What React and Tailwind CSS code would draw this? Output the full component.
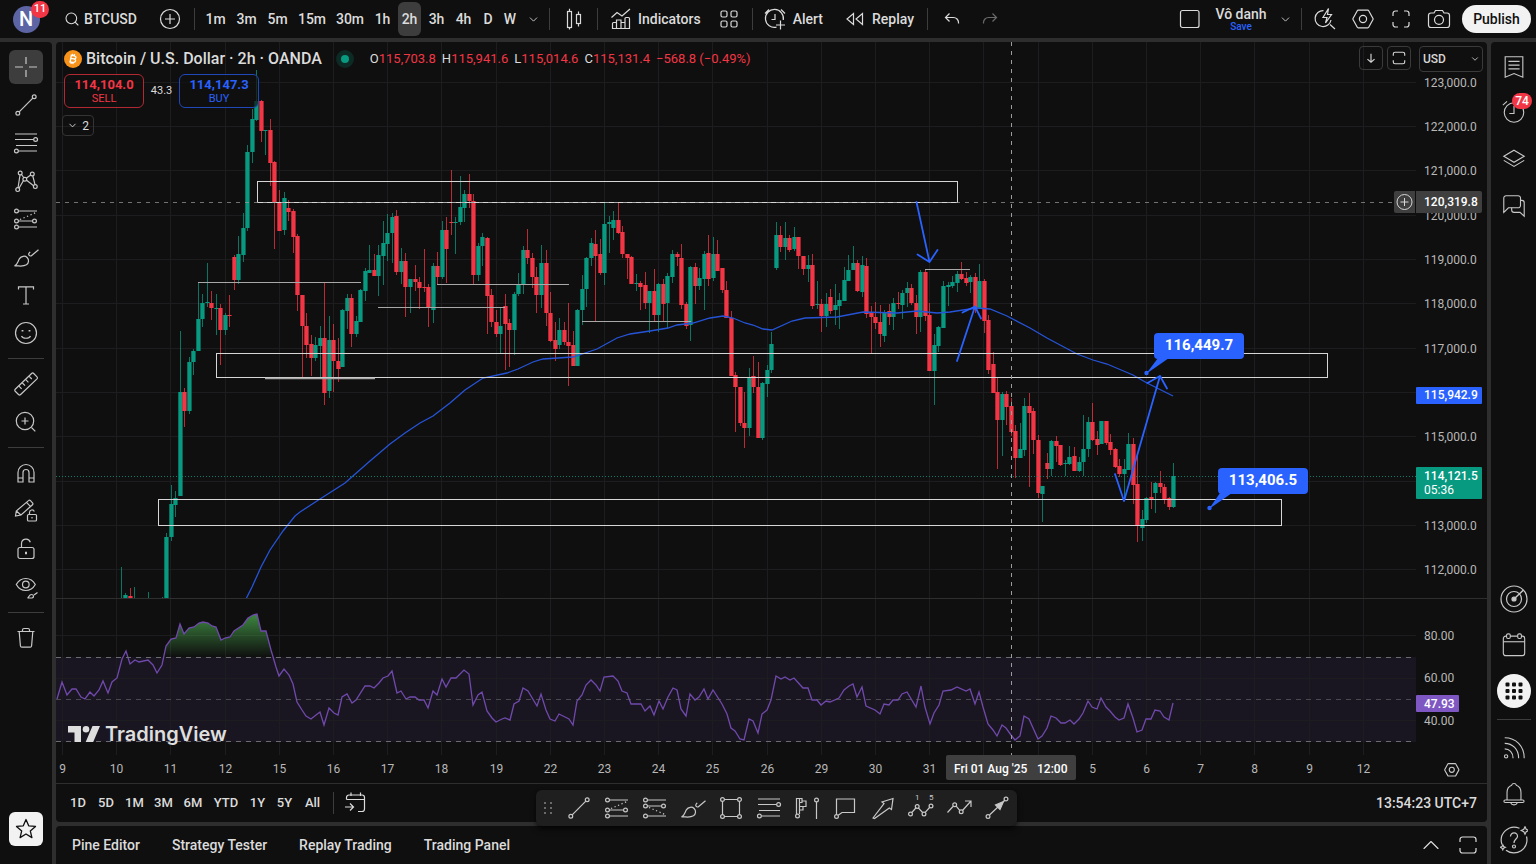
import { ChevronDown, ChevronUp, Search } from 'lucide-react';

// candles are [up, high, top, bottom, low] in chart space, one per two hours
const FIRST_BAR = 13;
const BAR_STEP = 4.517;
const CANDLES = [
  [1, 567, 598, 599, 599], [1, 593, 595, 599, 599], [0, 588, 596, 599, 599], [1, 587, 598, 599, 599], null, null, [1, 592, 598, 599, 599], null, null, [1, 597, 598, 599, 599],
  [1, 533, 537, 599, 599], [1, 485, 504, 537, 541], [1, 491, 498, 505, 517], [1, 331, 392, 496, 496], [0, 388, 392, 411, 427], [1, 357, 362, 411, 414], [1, 349, 351, 362, 375],
  [1, 282, 319, 351, 351], [1, 294, 303, 319, 327], [1, 263, 302, 303, 307], [0, 291, 303, 308, 320], [1, 294, 308, 309, 335], [0, 304, 308, 330, 365], [1, 313, 315, 330, 335],
  [0, 295, 315, 316, 327], [0, 255, 257, 280, 290], [1, 236, 254, 280, 284], [1, 213, 228, 255, 262], [1, 145, 152, 228, 231], [1, 109, 119, 152, 163], [1, 70, 101, 120, 121],
  [0, 100, 101, 131, 142], [1, 130, 130, 131, 155], [0, 119, 130, 163, 186], [0, 161, 162, 202, 249], [0, 190, 202, 231, 231], [1, 192, 198, 230, 235], [0, 200, 208, 212, 221],
  [0, 209, 211, 237, 253], [0, 234, 236, 295, 311], [0, 295, 295, 326, 379], [0, 313, 326, 345, 358], [0, 335, 344, 358, 376], [1, 337, 345, 358, 361], [1, 326, 338, 346, 378],
  [0, 282, 338, 393, 405], [1, 316, 340, 391, 398], [0, 324, 340, 361, 392], [0, 338, 361, 369, 382], [1, 309, 310, 367, 367], [1, 294, 298, 311, 329], [0, 294, 298, 334, 347],
  [1, 316, 321, 334, 337], [1, 289, 290, 322, 322], [1, 268, 271, 291, 301], [1, 245, 270, 273, 273], [0, 254, 270, 276, 276], [1, 245, 255, 276, 296], [1, 221, 243, 256, 285],
  [1, 214, 233, 244, 261], [1, 213, 217, 233, 263], [0, 210, 216, 272, 275], [1, 248, 261, 272, 284], [0, 253, 261, 287, 317], [1, 279, 279, 287, 313], [0, 265, 279, 282, 291],
  [0, 277, 282, 288, 309], [0, 249, 287, 288, 292], [0, 284, 287, 308, 327], [1, 263, 266, 310, 323], [0, 252, 266, 277, 285], [1, 221, 230, 277, 279], [0, 217, 230, 249, 283],
  [0, 170, 222, 223, 235], [1, 217, 222, 223, 254], [1, 176, 207, 222, 225], [1, 190, 194, 208, 222], [0, 174, 194, 201, 208], [0, 194, 201, 275, 284], [1, 243, 246, 275, 281],
  [1, 233, 237, 246, 266], [0, 237, 238, 296, 334], [0, 289, 295, 322, 327], [0, 310, 322, 334, 337], [1, 308, 326, 334, 354], [0, 294, 306, 324, 370], [0, 319, 323, 330, 367],
  [1, 292, 294, 330, 355], [1, 273, 285, 294, 296], [1, 246, 250, 285, 294], [0, 229, 250, 258, 264], [0, 253, 258, 277, 288], [0, 267, 277, 295, 313], [1, 245, 263, 295, 308],
  [0, 250, 263, 313, 326], [0, 292, 313, 341, 342], [0, 322, 340, 349, 361], [1, 318, 330, 345, 349], [0, 322, 330, 342, 345], [0, 303, 342, 346, 386], [0, 331, 345, 366, 366],
  [1, 309, 310, 366, 366], [1, 275, 289, 310, 325], [1, 257, 258, 289, 307], [1, 238, 243, 258, 266], [0, 230, 244, 256, 322], [0, 239, 254, 273, 275], [1, 203, 224, 273, 285],
  [1, 216, 222, 224, 253], [1, 211, 220, 228, 240], [0, 202, 220, 233, 234], [0, 226, 232, 254, 258], [0, 254, 254, 258, 279], [0, 256, 257, 284, 284], [1, 274, 283, 284, 291],
  [0, 281, 283, 287, 310], [0, 272, 285, 303, 309], [1, 291, 291, 303, 333], [0, 269, 291, 315, 322], [1, 283, 284, 315, 332], [0, 279, 284, 304, 322], [1, 273, 276, 303, 328],
  [1, 250, 254, 277, 283], [0, 252, 254, 257, 266], [0, 244, 258, 305, 309], [0, 302, 304, 326, 329], [1, 266, 267, 325, 341], [0, 263, 267, 286, 304], [1, 268, 278, 286, 290],
  [1, 251, 254, 279, 310], [0, 235, 253, 279, 286], [1, 237, 254, 278, 281], [0, 240, 254, 271, 271], [0, 268, 268, 290, 293], [0, 281, 290, 318, 318], [0, 311, 318, 376, 376],
  [0, 372, 375, 387, 432], [0, 387, 387, 423, 426], [0, 392, 423, 428, 448], [1, 368, 377, 428, 436], [0, 356, 376, 387, 393], [0, 362, 387, 438, 438], [1, 382, 383, 438, 440],
  [1, 365, 370, 384, 397], [1, 332, 344, 370, 373], [1, 222, 235, 268, 270], [0, 226, 235, 247, 252], [1, 222, 238, 247, 260], [0, 235, 238, 250, 252], [1, 227, 237, 249, 251],
  [0, 237, 237, 256, 269], [0, 256, 256, 269, 275], [1, 255, 265, 269, 282], [0, 254, 265, 306, 309], [1, 281, 304, 305, 309], [0, 299, 304, 316, 332], [1, 293, 304, 316, 327],
  [0, 289, 297, 311, 314], [1, 284, 305, 310, 325], [1, 293, 300, 306, 329], [1, 267, 280, 301, 301], [1, 255, 270, 281, 281], [1, 246, 263, 270, 270], [0, 260, 263, 291, 292],
  [1, 256, 265, 292, 297], [0, 258, 266, 314, 318], [0, 306, 313, 317, 353], [0, 302, 317, 323, 329], [0, 305, 322, 334, 347], [1, 310, 312, 336, 342], [0, 304, 311, 317, 325],
  [1, 298, 303, 317, 330], [0, 292, 303, 304, 309], [1, 290, 293, 305, 319], [1, 282, 288, 293, 307], [0, 284, 288, 303, 305], [0, 295, 303, 317, 334], [1, 270, 272, 317, 332],
  [0, 270, 272, 316, 321], [0, 303, 315, 371, 371], [1, 334, 345, 371, 405], [1, 326, 327, 346, 352], [1, 281, 286, 328, 328], [1, 282, 285, 287, 306], [1, 276, 282, 286, 288],
  [1, 271, 274, 283, 292], [0, 262, 274, 279, 280], [0, 272, 278, 283, 286], [1, 275, 277, 282, 293], [0, 273, 277, 309, 313], [1, 264, 281, 309, 309], [0, 279, 281, 321, 333],
  [0, 315, 320, 370, 374], [0, 352, 364, 393, 393], [0, 377, 392, 420, 469], [1, 392, 394, 420, 456], [0, 391, 394, 407, 425], [0, 398, 406, 432, 436], [0, 425, 431, 458, 478],
  [1, 423, 449, 458, 458], [1, 398, 406, 450, 456], [0, 393, 406, 413, 487], [0, 408, 411, 440, 454], [0, 435, 440, 493, 498], [1, 486, 486, 494, 522], [0, 453, 463, 469, 479],
  [1, 440, 441, 469, 476], [0, 436, 441, 446, 462], [0, 445, 445, 465, 466], [1, 460, 463, 464, 476], [1, 446, 457, 464, 465], [0, 447, 456, 471, 471], [1, 457, 462, 471, 472],
  [1, 415, 449, 462, 476], [1, 417, 422, 449, 457], [0, 403, 422, 440, 441], [0, 431, 439, 445, 455], [1, 421, 421, 444, 444], [0, 421, 421, 443, 445], [0, 434, 442, 450, 455],
  [0, 448, 449, 467, 468], [0, 459, 466, 474, 477], [1, 459, 469, 474, 500], [1, 433, 444, 470, 470], [0, 438, 444, 485, 504], [0, 456, 484, 526, 542], [1, 510, 519, 528, 541],
  [1, 497, 498, 520, 523], [0, 482, 497, 500, 509], [1, 482, 483, 493, 513], [0, 471, 483, 487, 493], [0, 484, 487, 499, 504], [0, 497, 498, 507, 510], [1, 463, 476, 507, 508],
];

const MA =
  '246,599 252,587 261,567 270,550 283,531 295,516 300,512 320,499 345,483 370,461 390,444 405,433 420,423 433,416 450,403 465,390 483,378 507,373 518,369 533,362 543,359 573,357 597,349 617,338 630,334 650,331 668,328 677,325 693,323 710,318 723,316 733,318 745,323 753,325 763,329 772,330 792,321 805,318 837,317 863,312 897,313 917,311 937,313 950,312 963,310 977,308 990,309 1007,316 1030,328 1047,338 1077,354 1093,360 1107,364 1133,375 1147,383 1173,396';

const RSI_START = '57,699 62,682 67,695 72,689 76,689 81,697 85,699 90,692 94,696 99,690 103,681 108,693 112,682 117,678 122,659 126,651 130,664 135,660 139,662 148,660 153,665 157,673 162,665';
const RSI_PEAK = '166,646 171,639 176,638 180,624 184,634 189,628 194,627 199,623 203,622 208,623 212,626 216,627 221,640 225,638 230,637 234,631 243,625 248,618 253,615 257,614 261,631 266,631 271,650';
const RSI_END =
  '276,667 279,676 284,669 289,675 293,684 297,702 302,710 306,716 311,719 316,715 320,712 324,725 329,708 334,713 338,715 342,697 347,694 352,703 356,700 365,686 370,686 374,688 379,683 383,678 388,676 392,671 397,693 401,691 406,699 410,697 415,697 419,700 424,700 428,708 433,691 437,695 442,679 446,687 451,678 456,678 464,670 469,674 473,705 478,695 482,692 487,711 492,718 496,722 502,719 505,718 510,720 514,704 519,701 523,688 528,691 537,706 541,694 546,710 550,719 555,721 559,714 569,719 573,725 577,701 582,695 586,685 591,680 596,685 600,691 604,677 613,676 618,681 622,691 627,693 631,704 641,704 645,711 650,706 654,715 659,701 663,709 668,697 673,688 677,690 681,709 686,716 690,694 695,700 699,697 704,689 708,699 713,690 722,704 727,714 731,728 735,731 740,739 744,740 749,719 753,721 758,733 762,714 767,710 771,700 776,676 781,679 785,677 790,680 794,678 803,688 808,688 812,700 817,700 821,705 826,701 830,702 839,698 844,690 849,686 853,684 857,697 862,687 866,706 875,710 880,714 884,704 889,705 893,700 898,700 902,694 907,692 916,707 921,686 925,707 930,724 934,713 939,705 943,691 951,690 957,687 966,691 970,689 975,704 979,692 983,707 988,724 993,730 997,736 1002,725 1006,728 1011,735 1015,740 1020,736 1024,716 1029,719 1038,739 1042,736 1047,728 1051,716 1056,718 1061,723 1065,723 1070,720 1074,724 1079,719 1083,713 1088,701 1092,707 1097,709 1101,698 1106,707 1110,711 1115,717 1119,720 1124,718 1128,704 1133,718 1137,732 1142,730 1146,719 1151,719 1155,710 1160,711 1164,717 1169,720 1173,703';

const DAYS = ['9', '10', '11', '12', '15', '16', '17', '18', '19', '22', '23', '24', '25', '26', '29', '30', '31', '', '', '5', '6', '7', '8', '9', '12'];
const PRICES = ['123,000.0', '122,000.0', '121,000.0', '120,000.0', '119,000.0', '118,000.0', '117,000.0', '', '115,000.0', '', '113,000.0', '112,000.0'];

const dayX = (i) => Math.round(62 + i * 54.2) + 0.5;
const priceY = (i) => Math.round(81.8 + i * 44.3) + 0.5;

function Icon({ children, size = 28, className = '' }) {
  return (
    <svg
      width={size}
      height={size}
      viewBox="0 0 28 28"
      fill="none"
      stroke="currentColor"
      strokeWidth="1.2"
      className={`shrink-0 ${className}`}
      aria-hidden="true"
    >
      {children}
    </svg>
  );
}

const TrendLine = () => (
  <>
    <circle cx="5.8" cy="22.2" r="1.9" />
    <circle cx="22.2" cy="5.8" r="1.9" />
    <path d="M7.2 20.8 20.8 7.2" />
  </>
);
const FibLines = () => (
  <>
    <path d="M3 5h22M3 10.5h18.6M4 16.5h21M6.4 22H25" />
    <circle cx="23.6" cy="10.5" r="1.9" />
    <circle cx="4.4" cy="22" r="1.9" />
  </>
);
const BrushIcon = () => (
  <>
    <path d="M2.5 22.8c3.2-1.2 3.2-4.4 5-7.2 1.7-2.6 5.5-3.2 7.6-1.1 2.2 2.2 1.8 5.6-.7 7.3-3.4 2.2-7.3.9-11.9 1z" />
    <path d="M26.5 6.8l-6.8 5.7c-.8.7-1.9.6-2.5-.1-.7-.8-.6-1.7.1-2.5l.9-1" />
  </>
);
const LongPosition = () => (
  <>
    <path d="M6.5 6H25M6.5 16H20.5M6.5 22H25" />
    <path d="M8 14.5 24 7.5" strokeDasharray="1.3 2.5" />
    <circle cx="4.5" cy="6" r="1.9" />
    <circle cx="4.5" cy="16" r="1.9" />
    <circle cx="4.5" cy="22" r="1.9" />
    <circle cx="22.5" cy="16" r="1.9" />
  </>
);
const ShortPosition = () => (
  <>
    <path d="M6.5 6H25M6.5 12H20.5M6.5 22H25" />
    <path d="M8 13.5 24 20.5" strokeDasharray="1.3 2.5" />
    <circle cx="4.5" cy="6" r="1.9" />
    <circle cx="4.5" cy="12" r="1.9" />
    <circle cx="4.5" cy="22" r="1.9" />
    <circle cx="22.5" cy="12" r="1.9" />
  </>
);
const Corners = () => <path d="M6 11V8.5A2.5 2.5 0 0 1 8.5 6H11M17 6h2.5A2.5 2.5 0 0 1 22 8.5V11M22 17v2.5a2.5 2.5 0 0 1-2.5 2.5H17M11 22H8.5A2.5 2.5 0 0 1 6 19.5V17" />;
const Maximize = () => <path d="M6 11V8.5A2.5 2.5 0 0 1 8.5 6h11A2.5 2.5 0 0 1 22 8.5V11M22 17v2.5a2.5 2.5 0 0 1-2.5 2.5h-11A2.5 2.5 0 0 1 6 19.5V17" />;
const HexNut = () => (
  <>
    <path d="M9.2 5.2h9.6a1 1 0 0 1 .9.5l4.3 7.8a1 1 0 0 1 0 1l-4.3 7.8a1 1 0 0 1-.9.5H9.2a1 1 0 0 1-.9-.5L4 14.5a1 1 0 0 1 0-1l4.3-7.8a1 1 0 0 1 .9-.5z" />
    <circle cx="14" cy="14" r="3.6" />
  </>
);

const DRAW_TOOLS = [
  ['Cross', <path d="M14 4v7M14 17v7M3 14h8M17 14h8" />],
  ['Trend line', <TrendLine />],
  ['Fib retracement', <FibLines />],
  ['XABCD pattern', (
    <>
      <path d="M6 21 8 8M9.5 7.5l2.5 3.5M14.2 11.2l4.5-3.2M20.8 9l2.2 8.6M21.6 18.7l-7.3-5.6M11.5 13.5 7 21.2" />
      <circle cx="8.2" cy="6" r="1.9" />
      <circle cx="20.3" cy="7" r="1.9" />
      <circle cx="12.8" cy="12.2" r="1.9" />
      <circle cx="23.3" cy="19.6" r="1.9" />
      <circle cx="5.7" cy="22.6" r="1.9" />
    </>
  )],
  ['Long position', <LongPosition />],
  ['Brush', <BrushIcon />],
  ['Text', <path d="M6.5 8.5V5.8h15v2.7M14 5.8V23M11 23h6" />],
  ['Icon', (
    <>
      <circle cx="14" cy="14" r="10.5" />
      <path d="M9.5 17c1.5 3 7.5 3 9 0" />
      <path d="M10.5 11v1.6M17.5 11v1.6" strokeWidth="1.8" />
    </>
  )],
  null,
  ['Measure', (
    <>
      <path d="M3.2 19.8 19.6 4a1.5 1.5 0 0 1 2.1 0L25 7.3a1.5 1.5 0 0 1 0 2.1L8.6 25a1.5 1.5 0 0 1-2.1 0l-3.3-3.2a1.4 1.4 0 0 1 0-2z" transform="translate(0 -.5)" />
      <path d="M7 16.2l2.6 2.6M10.4 13l2.6 2.6M13.8 9.7l2.6 2.6M17.2 6.4l2.6 2.6" />
    </>
  )],
  ['Zoom in', (
    <>
      <circle cx="13" cy="13" r="8.7" />
      <path d="M19.5 19.5l3.8 3.8M13 9.5v7M9.5 13h7" />
    </>
  )],
  null,
  ['Magnet mode', <path d="M6 23V13.5a8 8 0 0 1 16 0V23h-5V13.5a3 3 0 0 0-6 0V23zM6 19h5M17 19h5" />],
  ['Keep drawing', (
    <>
      <path d="M3.5 19l.8-5L16.5 3.6a1.5 1.5 0 0 1 2 0l2 2.2a1.5 1.5 0 0 1 0 2L9 18z M4.3 14 9 18M14.5 5.3l4.3 4.5" />
      <rect x="15.5" y="17.5" width="9" height="6.5" rx="1" />
      <path d="M17.5 17.5v-2a2.5 2.5 0 0 1 4.8-1M20 20v1.5" />
    </>
  )],
  ['Lock all drawings', (
    <>
      <rect x="6" y="12.5" width="16" height="11" rx="2" />
      <path d="M9.5 12.5V8.5a4.5 4.5 0 0 1 8.8-1.2" />
      <path d="M14 16.8v2.5" strokeWidth="2" />
    </>
  )],
  ['Hide all drawings', (
    <>
      <path d="M4.3 11.5c4.5-8 14.5-8 19 0-4.5 8-14.5 8-19 0z" />
      <circle cx="13.8" cy="11.5" r="3.3" />
      <path d="M15.5 25c1.5-.4 1.5-3.5 4-3.5 2.3 0 2.8 2.8.6 3.5zM25.5 19.5l-3.5 2.5" />
    </>
  )],
  null,
  ['Remove objects', <path d="M5.5 7.5h17M10.5 7.5v-1.5a1.5 1.5 0 0 1 1.5-1.5h4a1.5 1.5 0 0 1 1.5 1.5v1.5M7.2 7.5l1.2 14.3a1.5 1.5 0 0 0 1.5 1.4h8.2a1.5 1.5 0 0 0 1.5-1.4l1.2-14.3" />],
];

const RIGHT_TOP = [
  ['Watchlist', <path d="M4.5 3h19v22L14 21l-9.5 4zM8 8h12M8 12h12M8 16h12" />],
  ['Alerts', (
    <>
      <circle cx="14" cy="13.5" r="10.5" />
      <path d="M14 6.5v8H9M2 5.5l4.5-4" />
    </>
  )],
  ['Object tree', <path d="M14 4.5 25 11l-11 6.5L3 11zM3 15.5 14 22l11-6.5" />],
  ['Chats', (
    <>
      <path d="M3 22V6.5A2.5 2.5 0 0 1 5.5 4h13A2.5 2.5 0 0 1 21 6.5v8a2.5 2.5 0 0 1-2.5 2.5H8z" />
      <path d="M21 9h1.5A2.5 2.5 0 0 1 25 11.5V26l-4.5-4H14a2.5 2.5 0 0 1-2.5-2.5V17" />
    </>
  )],
];

const RIGHT_BOTTOM = [
  ['Screeners', (
    <>
      <circle cx="14" cy="14" r="13" />
      <circle cx="14" cy="14" r="7.5" />
      <circle cx="14" cy="14" r="2" fill="currentColor" />
      <path d="M14 14l9.5-9" strokeWidth="1.5" />
    </>
  )],
  ['Calendars', (
    <>
      <rect x="2.5" y="4.5" width="23" height="21" rx="2.5" />
      <path d="M2.5 10.5h23" />
      <rect x="6" y="2" width="4" height="5" rx="1.5" fill="#0f0f0f" />
      <rect x="18" y="2" width="4" height="5" rx="1.5" fill="#0f0f0f" />
    </>
  )],
  ['More', (
    <>
      {[7.5, 14, 20.5].map((y) =>
        [7.5, 14, 20.5].map((x) => <rect key={`${x}-${y}`} x={x - 2} y={y - 2} width="4" height="4" rx="1" fill="#0f0f0f" stroke="none" />)
      )}
    </>
  )],
  null,
  ['Feed', (
    <>
      <path d="M4 3c12 0 21 9 21 22M4 9c8.5 0 15 6.5 15 16M4 15c5 0 9 4 9 10" />
      <circle cx="5.5" cy="23" r="1.8" />
    </>
  )],
  ['Notifications', <path d="M4.5 20.5h19a1.2 1.2 0 0 1 0 2.7h-19a1.2 1.2 0 0 1 0-2.7zM6.5 20.5v-8C6.5 7 10 5 11.5 4.5 12 2 16 2 16.5 4.5 18 5 21.5 7 21.5 12.5v8M10.5 23.5c1 3 6 3 7 0" />],
  ['Help', (
    <>
      <path d="M19.5 2.3A13 13 0 0 0 2 18.5M6 24.2A13 13 0 0 0 26.5 10.5" />
      <path d="M10.5 10.5c0-5 7.5-4.5 7 0-.3 2.6-3.5 2.8-3.5 6.5" />
      <circle cx="14" cy="20.5" r="1.5" />
      <path d="M25 .8l1.2 2.5 2.5 1.2-2.5 1.2L25 8.2l-1.2-2.5-2.5-1.2 2.5-1.2zM2.8 18.8l.8 1.7 1.7.8-1.7.8-.8 1.7-.8-1.7-1.7-.8 1.7-.8z" />
    </>
  )],
];

const FAVORITES = [
  ['Trend line', <TrendLine />],
  ['Long position', <LongPosition />],
  ['Short position', <ShortPosition />],
  ['Brush', <BrushIcon />],
  ['Rectangle', (
    <>
      <path d="M7.4 5.5h13.2M7.4 22.5h13.2M5.5 7.4v13.2M22.5 7.4v13.2" />
      <circle cx="5.5" cy="5.5" r="1.9" />
      <circle cx="22.5" cy="5.5" r="1.9" />
      <circle cx="5.5" cy="22.5" r="1.9" />
      <circle cx="22.5" cy="22.5" r="1.9" />
    </>
  )],
  ['Fib retracement', <FibLines />],
  ['Volume profile', (
    <>
      <path d="M4.500 20V4.500H7.500V20M4.500 4.500H10V8.500H7.500M10 7h4v5.500H7.500M11 12.500v3.500H7.500M24.500 8v17" transform="translate(-1 0)" />
      <circle cx="4.5" cy="22" r="1.9" />
      <circle cx="23.5" cy="6" r="1.9" />
    </>
  )],
  ['Callout', (
    <>
      <path d="M5.5 20.5V5h18v13.5H11l-3.8 2.8" />
      <circle cx="5.5" cy="22.5" r="1.9" />
    </>
  )],
  ['Arrow marker', <path d="M4 24 15 9.500l-2-1.500L24 4.500 22.500 15.500l-2.200-1.500L5.500 24.500z" />],
  ['Elliott impulse wave', (
    <>
      <path d="M4.8 18.5 9.3 13.5M11.3 13.8 15.6 18.5M18.2 18.3l4.8-5.3" />
      <circle cx="3.5" cy="20" r="1.9" />
      <circle cx="10.2" cy="12.5" r="1.9" />
      <circle cx="17" cy="20" r="1.9" />
      <circle cx="24" cy="12" r="1.9" />
      <text x="8" y="6" fontSize="8" fill="currentColor" stroke="none">1</text>
      <text x="22" y="6" fontSize="8" fill="currentColor" stroke="none">5</text>
    </>
  )],
  ['Path', (
    <>
      <path d="M2.5 18.5 8 12.5M11.2 12.2l3.5 4.2M17.5 16.5 26 7M20 7h6v6" />
      <circle cx="9.7" cy="10.8" r="1.9" />
      <circle cx="16.2" cy="17.8" r="1.9" />
    </>
  )],
  ['Arrow', (
    <>
      <circle cx="5" cy="22.5" r="1.9" />
      <circle cx="23" cy="5" r="1.9" />
      <path d="M6.5 21 16 12M20 8l1.5-1.5" />
      <path d="M20.5 7.5 12.5 11l4.5 4.5z" fill="currentColor" />
    </>
  )],
];

function IconButton({ label, children, className = '' }) {
  return (
    <button type="button" aria-label={label} className={`flex items-center justify-center ${className}`}>
      {children}
    </button>
  );
}

const Divider = ({ className = '' }) => <div className={`h-[22px] w-px shrink-0 bg-[#3d3d3d] ${className}`} />;

const INTERVALS = [
  ['1m', 'w-[31px]'], ['3m', 'w-[31px]'], ['5m', 'w-[31px]'], ['15m', 'w-[38px]'], ['30m', 'w-[38px]'], ['1h', 'w-[27px]'],
  ['2h', 'w-[27px]'], ['3h', 'w-[27px]'], ['4h', 'w-[27px]'], ['D', 'w-[22px]'], ['W', 'w-[22px]'],
];

function TopBar() {
  return (
    <header className="flex h-[38px] shrink-0 items-center bg-[#0f0f0f] text-[14px] font-medium">
      <a href="#profile" className="relative flex w-[52px] justify-center" aria-label="Profile">
        <span className="flex size-[27px] items-center justify-center rounded-full bg-[#5c64a4] text-[20px] leading-none text-white">N</span>
        <span className="absolute -top-[5px] left-[31px] flex h-[17px] w-[18px] items-center justify-center rounded-full bg-[#f23645] text-[11px] text-white">11</span>
      </a>
      <button type="button" className="flex w-[100px] items-center gap-1 pl-3">
        <Search size={16} strokeWidth={1.6} />
        <span>BTCUSD</span>
      </button>
      <IconButton label="Compare symbols" className="w-9">
        <Icon>
          <circle cx="14" cy="14" r="9.5" />
          <path d="M14 9v10M9 14h10" />
        </Icon>
      </IconButton>
      <Divider className="ml-[6px] mr-[5px]" />
      {INTERVALS.map(([name, w]) => (
        <button key={name} type="button" className={`${w} flex h-[34px] items-center justify-center px-[2px]`}>
          <span className={name === '2h' ? 'flex h-full w-full items-center justify-center rounded-md bg-[#3d3d3d]' : ''}>{name}</span>
        </button>
      ))}
      <IconButton label="More intervals" className="w-[25px]"><ChevronDown size={13} strokeWidth={1.6} /></IconButton>
      <Divider className="ml-[3px]" />
      <IconButton label="Chart type" className="w-[47px]">
        <Icon>
          <rect x="7.5" y="6.5" width="4" height="16" />
          <path d="M9.5 3.8v2.7M9.5 22.5v2" />
          <rect x="16.5" y="9.5" width="4" height="9" />
          <path d="M18.5 6.5v3M18.5 18.5v3" />
        </Icon>
      </IconButton>
      <Divider className="mr-[9px]" />
      <button type="button" className="flex items-center gap-[3px]">
        <Icon>
          <path d="M5.5 23.5v-5a1 1 0 0 1 1-1h3v6zM9.5 23.5v-8.5h4.5v8.5M14 17.5h4v6M18 23.5v-10a1 1 0 0 1 1-1h2.5a1 1 0 0 1 1 1v10zM5.5 23.5h17" />
          <path d="M4.5 12.5l5.5-5 5 3.5 8-7" />
        </Icon>
        <span>Indicators</span>
      </button>
      <IconButton label="Indicator templates" className="ml-[14px] w-7">
        <Icon>
          <rect x="6" y="6" width="6" height="6" rx="1.5" />
          <rect x="16" y="6" width="6" height="6" rx="1.5" />
          <rect x="6" y="16" width="6" height="6" rx="1.5" />
          <rect x="16" y="16" width="6" height="6" rx="1.5" />
        </Icon>
      </IconButton>
      <Divider className="ml-[9px] mr-[8px]" />
      <button type="button" className="flex items-center gap-[4px]">
        <Icon>
          <path d="M15.5 22.2A9 9 0 1 1 22.3 15M14 9v5.5h-3.5M4 8.5 8 4.5M20 4.5l4 4M19.5 15.5v9M15 20h9" />
        </Icon>
        <span>Alert</span>
      </button>
      <button type="button" className="ml-[18px] flex items-center gap-[3px]">
        <Icon>
          <path d="M12.5 8.5v11L6 14zM21.5 8.5v11L15 14z" />
        </Icon>
        <span>Replay</span>
      </button>
      <Divider className="ml-[13px] mr-[8px]" />
      <IconButton label="Undo" className="w-8"><Icon><path d="M11.5 8.5l-4 4 4 4M7.5 12.5h8a5 5 0 0 1 5 5v1" /></Icon></IconButton>
      <IconButton label="Redo" className="ml-[6px] w-8 text-[#6a6a6a]"><Icon><path d="M16.5 8.5l4 4-4 4M20.5 12.5h-8a5 5 0 0 0-5 5v1" /></Icon></IconButton>

      <div className="ml-auto flex items-center">
        <IconButton label="Layout" className="w-8"><Icon><rect x="4.5" y="5.5" width="18.5" height="17" rx="2" /></Icon></IconButton>
        <button type="button" className="ml-[7px] flex w-[56px] flex-col items-center leading-none">
          <span className="leading-4">Vô danh</span>
          <span className="text-[10px] leading-[10px] text-[#2962ff]">Save</span>
        </button>
        <IconButton label="Manage layouts" className="w-8"><ChevronDown size={13} strokeWidth={1.6} /></IconButton>
        <Divider className="mr-[4px]" />
        <IconButton label="Quick search" className="w-[38px]">
          <Icon>
            <path d="M12.5 5.6A8 8 0 1 0 20 15M19 19.5l5 4.5M17.5 3.5 12 12.5h4l-1.5 5.5L20.5 9.5h-4z" />
          </Icon>
        </IconButton>
        <IconButton label="Settings" className="w-[38px]"><Icon><HexNut /></Icon></IconButton>
        <IconButton label="Fullscreen" className="w-[38px]"><Icon><Corners /></Icon></IconButton>
        <IconButton label="Snapshot" className="w-[38px]">
          <Icon>
            <path d="M10.5 5.5h7l1.5 2.5h3a2.5 2.5 0 0 1 2.5 2.5V20a2.5 2.5 0 0 1-2.5 2.5H6A2.5 2.5 0 0 1 3.5 20v-9.5A2.5 2.5 0 0 1 6 8h3z" />
            <circle cx="14" cy="14.8" r="4.5" />
          </Icon>
        </IconButton>
        <button type="button" className="ml-[4px] mr-[5px] h-7 w-[69px] rounded-full bg-[#f2f2f2] text-[#0f0f0f]">Publish</button>
      </div>
    </header>
  );
}

function DrawingToolbar() {
  return (
    <nav aria-label="Drawing tools" className="flex w-[52px] shrink-0 flex-col items-center rounded-tr bg-[#0f0f0f] pt-[6px] text-[#c8c8c8]">
      {DRAW_TOOLS.map((tool, i) =>
        tool ? (
          <IconButton key={tool[0]} label={tool[0]} className="h-[38px] w-full shrink-0">
            <span className={`flex h-[34px] w-[34px] items-center justify-center ${i === 0 ? 'rounded-md bg-[#3d3d3d]' : ''}`}>
              <Icon>{tool[1]}</Icon>
            </span>
          </IconButton>
        ) : (
          <div key={i} className="flex h-[13px] w-9 items-center">
            <div className="h-px w-full bg-[#3d3d3d]" />
          </div>
        )
      )}
      <IconButton label="Favorite tools" className="mb-[18px] mt-auto h-[34px] w-[34px] shrink-0 rounded-md bg-[#f2f2f2] text-[#0f0f0f]">
        <Icon>
          <path strokeWidth="1.3" strokeLinejoin="round" d="M14 4.5l2.7 6.3 6.8.6-5.2 4.5 1.6 6.7-5.9-3.6-5.9 3.6 1.6-6.7-5.2-4.5 6.8-.6z" />
        </Icon>
      </IconButton>
    </nav>
  );
}

function RightToolbar() {
  return (
    <nav aria-label="Widgets" className="flex w-[45px] shrink-0 flex-col items-center rounded-tl bg-[#0f0f0f] pt-[2px] pb-px text-[#c8c8c8]">
      {RIGHT_TOP.map(([label, icon]) => (
        <IconButton key={label} label={label} className="relative h-[46px] w-full">
          <Icon size={26}>{icon}</Icon>
          {label === 'Alerts' && (
            <span className="absolute right-[4px] top-[3px] flex h-4 w-5 items-center justify-center rounded-full bg-[#f23645] text-[12px] font-medium text-white">74</span>
          )}
        </IconButton>
      ))}
      <div className="mt-auto" />
      {RIGHT_BOTTOM.map((item, i) =>
        item ? (
          <IconButton key={item[0]} label={item[0]} className="h-[46px] w-full">
            <span className={item[0] === 'More' ? 'flex size-[34px] items-center justify-center rounded-full bg-[#f2f2f2]' : ''}>
              <Icon size={item[0] === 'Screeners' || item[0] === 'More' || item[0] === 'Help' ? 28 : 26}>{item[1]}</Icon>
            </span>
          </IconButton>
        ) : (
          <div key={i} className="flex h-[11px] w-[34px] items-center">
            <div className="h-px w-full bg-[#3d3d3d]" />
          </div>
        )
      )}
    </nav>
  );
}

function Candle({ bar, index }) {
  const [up, high, top, bottom, low] = bar;
  const x = Math.round(62.2 + index * BAR_STEP);
  const color = up ? '#089981' : '#f23645';
  return (
    <g fill={color}>
      <rect x={x} y={high} width="1" height={low - high} opacity="0.75" />
      <rect x={x - 1.7} y={top} width="4.3" height={Math.max(1, bottom - top)} />
    </g>
  );
}

function Callout({ x, y, text, points, tip }) {
  return (
    <g fill="#2962ff">
      <polygon points={points} />
      <circle cx={tip[0]} cy={tip[1]} r="2.2" />
      <rect x={x} y={y} width="90" height="26" rx="4" />
      <text x={x + 45} y={y + 17} textAnchor="middle" fontSize="15" fontWeight="700" fill="#fff">{text}</text>
    </g>
  );
}

function PriceChart() {
  return (
    <svg viewBox="56 42 1431 741" preserveAspectRatio="xMinYMin meet" className="block h-full w-full" role="img" aria-label="BTCUSD two hour candles with RSI">
      <defs>
        <linearGradient id="overbought" x1="0" y1="614" x2="0" y2="657" gradientUnits="userSpaceOnUse">
          <stop offset="0" stopColor="#4caf50" stopOpacity="0.75" />
          <stop offset="1" stopColor="#4caf50" stopOpacity="0" />
        </linearGradient>
        <clipPath id="pricePane"><rect x="56" y="42" width="1360" height="556" /></clipPath>
      </defs>

      <rect x="56" y="657" width="1360" height="85" fill="#7e57c2" fillOpacity="0.1" />
      <g stroke="#1d1d1f" strokeWidth="1">
        {DAYS.map((d, i) => <line key={i} x1={dayX(i)} x2={dayX(i)} y1="42" y2="755" />)}
        {PRICES.map((p, i) => <line key={i} x1="56" x2="1416" y1={priceY(i)} y2={priceY(i)} />)}
        {[635.5, 678.5, 720.5].map((y) => <line key={y} x1="56" x2="1416" y1={y} y2={y} />)}
      </g>
      <line x1="56" x2="1487" y1="598.5" y2="598.5" stroke="#2e2e2e" />

      <g clipPath="url(#pricePane)">
        {CANDLES.map((bar, i) => bar && <Candle key={i} bar={bar} index={FIRST_BAR + i} />)}
        <polyline points={MA} fill="none" stroke="#2654d8" strokeWidth="1.3" />
        <line x1="56" x2="1416" y1="476.5" y2="476.5" stroke="#089981" strokeDasharray="1 2" opacity="0.8" />
      </g>

      <g fill="none" stroke="#d6d6d6">
        <rect x="257.5" y="181.5" width="700" height="21" />
        <rect x="216.5" y="353.5" width="1111" height="24" />
        <rect x="158.5" y="499.5" width="1123" height="26" />
      </g>
      <g stroke="#a8a8a8">
        <path d="M198 282.5h163M378 307.5h127M437 284.5h132M582 321.5h109M925 269.5h45" />
        <path d="M265 378.5h110" strokeWidth="1.5" />
      </g>

      <g fill="none" stroke="#2962ff" strokeWidth="1.8" strokeLinecap="round" strokeLinejoin="round">
        <path d="M916.5 202 929.5 262M917.5 254.5 929.5 262 937.5 250" />
        <path d="M957 361 975 306.5M962.5 312.5 975 306.5 981 318.5" />
        <path d="M1115 474 1124 501 1160 376M1147.5 383 1160 376 1167 388.5" />
      </g>
      <Callout x={1154} y={333} text="116,449.7" tip={[1146.5, 373]} points="1158,358 1169,358 1146,374" />
      <Callout x={1218} y={468} text="113,406.5" tip={[1209.5, 508]} points="1220,493 1232,493 1209,509" />

      <polygon points={`164,657 ${RSI_PEAK} 273,657`} fill="url(#overbought)" />
      <polyline points={`${RSI_START} ${RSI_PEAK} ${RSI_END}`} fill="none" stroke="#7049ad" strokeWidth="1.3" />
      <g stroke="#6b6b70" strokeDasharray="5 5">
        <line x1="56" x2="1416" y1="657.5" y2="657.5" />
        <line x1="56" x2="1416" y1="699.5" y2="699.5" opacity="0.6" />
        <line x1="56" x2="1416" y1="741.5" y2="741.5" />
      </g>
      <g stroke="#9c9c9c" strokeDasharray="4 5">
        <line x1="1011.5" x2="1011.5" y1="42" y2="755" />
        <line x1="56" x2="1394" y1="202.5" y2="202.5" opacity="0.7" />
      </g>

      <g fill="#b8b8b8" fontSize="12">
        {PRICES.map((p, i) => <text key={i} x="1424" y={priceY(i) + 4}>{p}</text>)}
        <text x="1424" y="640">80.00</text>
        <text x="1424" y="682">60.00</text>
        <text x="1424" y="725">40.00</text>
        {DAYS.map((d, i) => <text key={i} x={dayX(i)} y="773" textAnchor="middle">{d}</text>)}
      </g>

      <g fontSize="12" fill="#fff" fontWeight="500">
        <rect x="1394" y="191" width="88" height="22" rx="2" fill="#3f3f3f" />
        <line x1="1415.5" x2="1415.5" y1="191" y2="213" stroke="#0f0f0f" />
        <circle cx="1404.5" cy="202" r="7.5" fill="none" stroke="#d6d6d6" />
        <path d="M1404.5 198v8M1400.5 202h8" stroke="#d6d6d6" />
        <text x="1424" y="206">120,319.8</text>
        <rect x="1416" y="387" width="66" height="17" rx="1" fill="#2962ff" />
        <text x="1424" y="399">115,942.9</text>
        <rect x="1416" y="467" width="66" height="32" rx="1" fill="#089981" />
        <text x="1424" y="480">114,121.5</text>
        <text x="1424" y="494" fontWeight="400">05:36</text>
        <rect x="1416" y="695" width="43" height="17" rx="1" fill="#7e57c2" />
        <text x="1424" y="708">47.93</text>
        <rect x="946" y="755" width="130" height="25" rx="2" fill="#3f3f3f" />
        <text x="954" y="773">Fri 01 Aug '25</text>
        <text x="1037" y="773">12:00</text>
      </g>
      <g transform="translate(1442 760) scale(.7)" fill="none" stroke="#c8c8c8" strokeWidth="1.6"><HexNut /></g>
    </svg>
  );
}

function Legend() {
  const values = [['O', '115,703.8'], ['H', '115,941.6'], ['L', '115,014.6'], ['C', '115,131.4']];
  return (
    <div className="absolute left-2 top-[7px] flex flex-col items-start">
      <div className="flex h-5 items-center">
        <svg width="18" height="18" viewBox="0 0 18 18" className="shrink-0" aria-hidden="true">
          <circle cx="9" cy="9" r="9" fill="#f7931a" />
          <path d="M7.4 4.8 6 12.7M6.7 5.2l3.6.6c2.6.5 2.2 3.3-.6 3L7 8.4M9.5 8.8c3.2.5 2.6 4-.8 3.6l-3.3-.6M8.7 3.8l-.2 1.4M10.6 4.1l-.3 1.4M7.2 12.5l-.2 1.4M9.1 12.8l-.3 1.4" fill="none" stroke="#fff" strokeWidth="1.3" />
        </svg>
        <h1 className="ml-1 text-[16px] font-medium whitespace-nowrap">Bitcoin / U.S. Dollar · 2h · OANDA</h1>
        <span className="ml-[14px] flex size-[18px] items-center justify-center rounded-full bg-[#0d2a25]">
          <span className="size-2 rounded-full bg-[#089981]" />
        </span>
        <p className="ml-[16px] flex gap-[6px] text-[13px] whitespace-nowrap">
          {values.map(([k, v]) => (
            <span key={k}>{k}<span className="text-[#f23645]">{v}</span></span>
          ))}
          <span className="text-[#f23645]">−568.8 (−0.49%)</span>
        </p>
      </div>
      <div className="mt-[5px] flex h-[34px] items-center text-center">
        <button type="button" className="h-full w-20 rounded-md border border-[#b22833] bg-[#0f0f0f]/70 text-[#f23645]">
          <span className="block text-[13px] leading-4 font-bold">114,104.0</span>
          <span className="block text-[11px] leading-3">SELL</span>
        </button>
        <span className="w-[35px] text-[11px]">43.3</span>
        <button type="button" className="h-full w-20 rounded-md border border-[#2148b8] bg-[#0f0f0f]/70 text-[#2962ff]">
          <span className="block text-[13px] leading-4 font-bold">114,147.3</span>
          <span className="block text-[11px] leading-3">BUY</span>
        </button>
      </div>
      <button type="button" className="-ml-0.5 mt-[7px] flex h-[21px] w-8 items-center justify-center gap-1 rounded-sm border border-[#343434] text-[12px]">
        <ChevronDown size={11} strokeWidth={2} />
        2
      </button>
    </div>
  );
}

const RANGES = [
  ['1D', 'w-[28px]'], ['5D', 'w-[28px]'], ['1M', 'w-[29px]'], ['3M', 'w-[29px]'], ['6M', 'w-[30px]'],
  ['YTD', 'w-[36px]'], ['1Y', 'w-[27px]'], ['5Y', 'w-[27px]'], ['All', 'w-[29px]'],
];

function ChartPanel() {
  return (
    <section className="relative flex min-h-0 flex-1 flex-col rounded bg-[#0f0f0f]">
      <div className="relative min-h-0 flex-1">
        <PriceChart />
        <Legend />
        <div className="absolute right-1 top-1 flex text-[#d6d6d6]">
          <IconButton label="Scroll to most recent bar" className="size-6 rounded border border-[#3a3a3a]">
            <Icon size={20}><path strokeWidth="1.6" d="M14 8v12M9 15.500l5 4.500 5-4.500" /></Icon>
          </IconButton>
          <IconButton label="Maximize chart" className="ml-1 size-6 rounded border border-[#3a3a3a]">
            <Icon size={20}><g strokeWidth="1.6"><Maximize /></g></Icon>
          </IconButton>
          <div className="relative ml-2">
            <select aria-label="Currency" defaultValue="USD" className="h-[26px] w-16 appearance-none rounded border border-[#3a3a3a] bg-[#0f0f0f] pl-[3px] text-[12px] font-medium">
              <option>USD</option>
            </select>
            <ChevronDown size={10} className="pointer-events-none absolute right-[3px] top-[8px]" />
          </div>
        </div>
        <div className="absolute bottom-[37px] left-3 flex items-center gap-[5px] text-[#dedede]">
          <svg width="32" height="18" viewBox="0 0 32 18" fill="currentColor" aria-hidden="true">
            <path d="M0 1h13v16H6.5V7.5H0zM24.5 1H32l-6.8 16h-7.5z" />
            <circle cx="18" cy="4.3" r="3.3" />
          </svg>
          <span className="font-[Inter,sans-serif] text-[20px] leading-6 font-semibold">TradingView</span>
        </div>
      </div>
      <div className="flex h-[39px] shrink-0 items-center border-t border-[#2e2e2e] pl-2 text-[13px] font-medium">
        {RANGES.map(([name, w]) => (
          <button key={name} type="button" className={w}>{name}</button>
        ))}
        <Divider className="ml-[6px] mr-[8px]" />
        <IconButton label="Go to date" className="w-7">
          <Icon>
            <path d="M4.5 10.5v-2A2.5 2.5 0 0 1 7 6h13a2.5 2.5 0 0 1 2.5 2.5v11.5a2.5 2.5 0 0 1-2.5 2.5h-4M4.500 10.5h18M9 3.5V7M18.5 3.5V7M3 18h8.5M8 14.5l3.5 3.5L8 21.5" />
          </Icon>
        </IconButton>
        <time className="ml-auto mr-[10px] text-[14px]">13:54:23 UTC+7</time>
      </div>
      <div className="absolute -bottom-1 left-[480px] z-10 flex h-9 items-center rounded-md bg-[#1f1f1f] pl-[8px] pr-px text-[#c8c8c8] shadow-md shadow-black/60">
        <svg width="8" height="14" viewBox="0 0 8 14" fill="#6a6a6a" className="mr-[8px]" aria-hidden="true">
          {[1, 6, 11].map((y) => <path key={y} d={`M0 ${y}h2v2h-2zM6 ${y}h2v2h-2z`} />)}
        </svg>
        {FAVORITES.map(([label, icon]) => (
          <IconButton key={label} label={label} className="h-9 w-[38px]"><Icon>{icon}</Icon></IconButton>
        ))}
      </div>
    </section>
  );
}

function BottomPanel() {
  return (
    <footer className="flex h-[38px] shrink-0 items-center rounded-t bg-[#0f0f0f] pl-4 text-[14px]">
      {['Pine Editor', 'Strategy Tester', 'Replay Trading', 'Trading Panel'].map((tab) => (
        <button key={tab} type="button" className="mr-8 font-medium whitespace-nowrap">{tab}</button>
      ))}
      <IconButton label="Open panel" className="ml-auto w-9">
        <ChevronUp size={28} strokeWidth={1} />
      </IconButton>
      <IconButton label="Maximize panel" className="w-[38px]"><Icon><Maximize /></Icon></IconButton>
    </footer>
  );
}

export default function App() {
  return (
    <div className="flex h-screen flex-col gap-1 overflow-hidden bg-[#2e2e2e] font-[Roboto,'Open_Sans',sans-serif] text-[#dbdbdb]">
      <TopBar />
      <div className="flex min-h-0 flex-1 gap-1">
        <DrawingToolbar />
        <main className="flex min-w-0 flex-1 flex-col gap-1">
          <ChartPanel />
          <BottomPanel />
        </main>
        <RightToolbar />
      </div>
    </div>
  );
}
